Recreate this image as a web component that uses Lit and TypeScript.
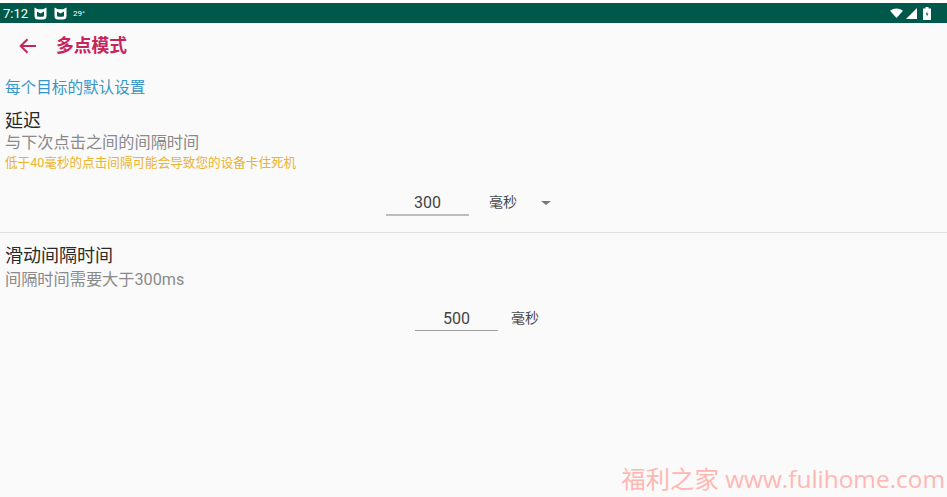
import { LitElement, html, css, svg } from 'lit';
import { customElement } from 'lit/decorators.js';

const miIcon = svg`<path d="M0.5 0.5 L3.8 2.2 H9.2 L12.5 0.5 V9 Q12.5 12.5 9 12.5 H4 Q0.5 12.5 0.5 9 Z M3 4.6 V8.4 Q3 9.8 4.4 9.8 H8.6 Q10 9.8 10 8.4 V4.6 L6.5 6.4 Z" fill="#fff" fill-rule="evenodd"/>`;

@customElement('app-root')
export class AppRoot extends LitElement {
  static styles = css`
    :host {
      display: block;
      position: relative;
      width: 947px;
      height: 497px;
      overflow: hidden;
      background: #fafafa;
      font-family: Roboto, "Noto Sans CJK SC", sans-serif;
    }
    .top-gap {
      height: 3px;
      background: #fff;
    }
    .status {
      height: 20px;
      background: #00584a;
      color: #fff;
      display: flex;
      align-items: center;
      padding: 0 16px 0 3px;
      font-size: 13px;
    }
    .status .time {
      margin-right: 6px;
    }
    .status .mi {
      margin-right: 7px;
      display: block;
    }
    .status .temp {
      font-size: 8px;
      margin-left: -1px;
    }
    .status .right {
      margin-left: auto;
      display: flex;
      align-items: center;
      gap: 3px;
    }
    .status .battery {
      margin-left: 3px;
    }
    .toolbar {
      height: 46px;
      display: flex;
      align-items: center;
      padding-left: 19px;
      color: #c6245f;
    }
    .toolbar svg {
      display: block;
      margin-right: 20px;
    }
    .toolbar .title {
      font-size: 17.8px;
      font-weight: 700;
      line-height: 46px;
    }
    .section {
      padding: 8px 5px 0;
      color: #3796c9;
      font-size: 15.6px;
      line-height: 22px;
    }
    .pref {
      padding: 0 5px;
    }
    .pref-title {
      font-size: 18px;
      line-height: 24px;
      color: #2a2a2a;
    }
    .pref-sub {
      font-size: 16.2px;
      line-height: 22px;
      color: #8a8a8a;
    }
    .pref-warn {
      font-size: 12.6px;
      line-height: 19px;
      color: #ebb32f;
    }
    .delay {
      margin-top: 10px;
    }
    .delay .pref-sub {
      margin-top: -1px;
    }
    .delay .pref-warn {
      margin-top: -1px;
    }
    .row {
      display: flex;
      justify-content: center;
      align-items: flex-start;
    }
    .field {
      width: 83px;
      height: 26px;
      box-sizing: border-box;
      text-align: center;
      font-size: 16px;
      line-height: 27px;
      color: #444;
      border-bottom: 1px solid #9e9e9e;
    }
    .field.strong {
      height: 27px;
      border-bottom-width: 2px;
      border-bottom-color: #bdbdbd;
    }
    .unit {
      font-size: 14px;
      line-height: 26px;
      color: #4a4a4a;
    }
    .spinner {
      display: flex;
      align-items: flex-start;
      margin-left: 20px;
    }
    .caret {
      display: block;
      margin: 12px 0 0 24px;
      width: 0;
      height: 0;
      border-left: 5px solid transparent;
      border-right: 5px solid transparent;
      border-top: 4px solid #777;
    }
    .divider {
      height: 1px;
      background: #e0e0e0;
      margin-top: 16px;
    }
    .swipe {
      margin-top: 11px;
    }
    .swipe .pref-sub {
      margin-top: 1px;
    }
    .swipe .row {
      margin-top: 14px;
      padding-left: 7px;
    }
    .swipe .unit {
      margin-left: 13px;
    }
    .delay .row {
      margin-top: 17px;
      padding-right: 10px;
    }
    .watermark {
      position: absolute;
      right: 2px;
      bottom: 2px;
      font-size: 24.4px;
      line-height: 32px;
      color: #ffb7b2;
      font-family: "Open Sans", "Noto Sans CJK SC", sans-serif;
      white-space: nowrap;
    }
  `;

  render() {
    return html`
      <div class="top-gap"></div>
      <div class="status">
        <span class="time">7:12</span>
        <svg class="mi" width="13" height="13" viewBox="0 0 13 13">${miIcon}</svg>
        <svg class="mi" width="13" height="13" viewBox="0 0 13 13">${miIcon}</svg>
        <span class="temp">29°</span>
        <div class="right">
          <svg width="13" height="10" viewBox="0 0 13 10"><path d="M0 2.8 Q6.5 -1.8 13 2.8 L6.5 10 Z" fill="#fff"/></svg>
          <svg width="11" height="11" viewBox="0 0 11 11"><path d="M0 11 L11 0 V11 Z" fill="#fff"/></svg>
          <svg class="battery" width="8" height="13" viewBox="0 0 8 13"><path d="M2.5 0 H5.5 V1.5 H8 V13 H0 V1.5 H2.5 Z" fill="#fff"/><path d="M4.3 4 L2.8 7.4 H3.9 L3.7 10 L5.3 6.4 H4.1 Z" fill="#00584a"/></svg>
        </div>
      </div>
      <div class="toolbar">
        <svg width="17" height="16" viewBox="0 0 17 16" fill="none" stroke="#c6245f" stroke-width="2">
          <path d="M17 8 H2 M8.5 1.2 L1.7 8 L8.5 14.8"/>
        </svg>
        <span class="title">多点模式</span>
      </div>
      <div class="section">每个目标的默认设置</div>
      <div class="pref delay">
        <div class="pref-title">延迟</div>
        <div class="pref-sub">与下次点击之间的间隔时间</div>
        <div class="pref-warn">低于40毫秒的点击间隔可能会导致您的设备卡住死机</div>
        <div class="row">
          <div class="field strong">300</div>
          <div class="spinner">
            <span class="unit">毫秒</span>
            <span class="caret"></span>
          </div>
        </div>
      </div>
      <div class="divider"></div>
      <div class="pref swipe">
        <div class="pref-title">滑动间隔时间</div>
        <div class="pref-sub">间隔时间需要大于300ms</div>
        <div class="row">
          <div class="field">500</div>
          <span class="unit">毫秒</span>
        </div>
      </div>
      <div class="watermark">福利之家 www.fulihome.com</div>
    `;
  }
}
